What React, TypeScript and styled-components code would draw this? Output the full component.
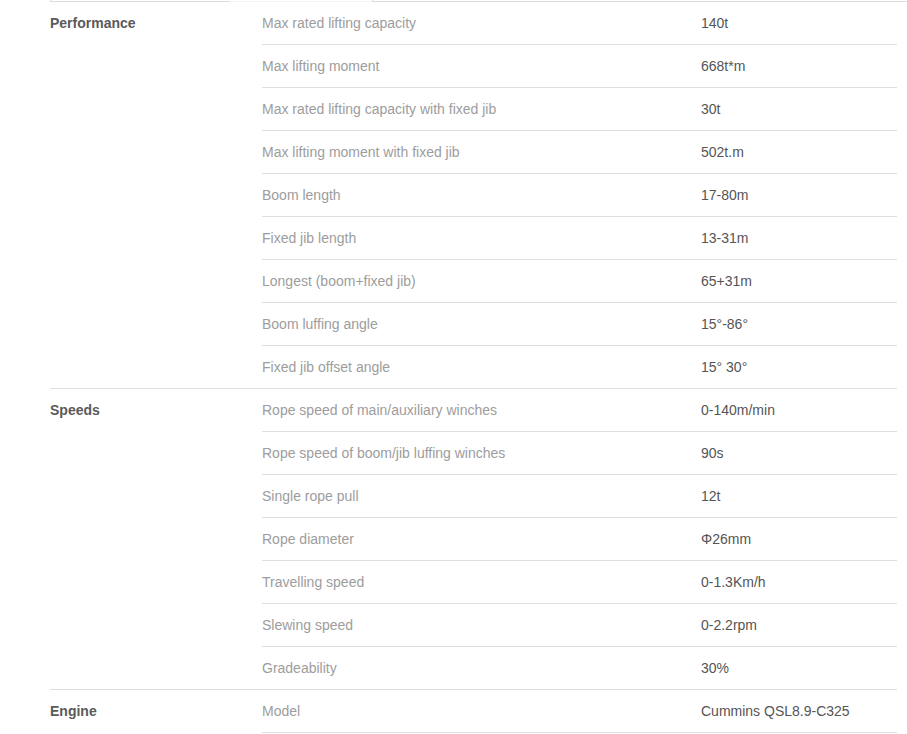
import React from "react";
import styled, { createGlobalStyle } from "styled-components";

const Global = createGlobalStyle`
  html, body { margin: 0; padding: 0; background: #fff; }
  body { font-family: "Liberation Sans", Arial, sans-serif; }
`;

const Page = styled.div`
  width: 907px;
  overflow: hidden;
`;

const TabStrip = styled.div`
  display: flex;
  height: 2px;
  padding-left: 50px;
`;

const Tab = styled.div<{ $active?: boolean; $grow?: boolean }>`
  box-sizing: border-box;
  height: 2px;
  width: ${(p) => (p.$grow ? "auto" : p.$active ? "142px" : "180px")};
  flex: ${(p) => (p.$grow ? "1" : "none")};
  border-bottom: 1px solid ${(p) => (p.$active ? "#f3f3f3" : "#dcdcdc")};
  border-left: ${(p) => (p.$grow ? "1px solid #dcdcdc" : p.$active ? "none" : "1px solid #dcdcdc")};
`;

const Table = styled.div`
  margin-left: 50px;
  width: 847px;
  display: flex;
  flex-direction: column;
`;

const Group = styled.div<{ $last?: boolean }>`
  display: flex;
  border-bottom: ${(p) => (p.$last ? "none" : "1px solid #dedede")};
`;

const GroupName = styled.div`
  width: 212px;
  flex: none;
  font-size: 14px;
  font-weight: bold;
  color: #5a5a5a;
  line-height: 42px;
`;

const Items = styled.div`
  flex: 1;
  display: flex;
  flex-direction: column;
`;

const Row = styled.div<{ $border: boolean }>`
  display: flex;
  height: 42px;
  align-items: center;
  border-bottom: ${(p) => (p.$border ? "1px solid #dedede" : "none")};
  font-size: 14px;
`;

const Param = styled.div`
  width: 439px;
  flex: none;
  color: #9d9d9d;
`;

const Value = styled.div`
  flex: 1;
  color: #555;
`;

type Spec = { group: string; rows: [string, string][] };

const specs: Spec[] = [
  {
    group: "Performance",
    rows: [
      ["Max rated lifting capacity", "140t"],
      ["Max lifting moment", "668t*m"],
      ["Max rated lifting capacity with fixed jib", "30t"],
      ["Max lifting moment with fixed jib", "502t.m"],
      ["Boom length", "17-80m"],
      ["Fixed jib length", "13-31m"],
      ["Longest (boom+fixed jib)", "65+31m"],
      ["Boom luffing angle", "15°-86°"],
      ["Fixed jib offset angle", "15° 30°"],
    ],
  },
  {
    group: "Speeds",
    rows: [
      ["Rope speed of main/auxiliary winches", "0-140m/min"],
      ["Rope speed of boom/jib luffing winches", "90s"],
      ["Single rope pull", "12t"],
      ["Rope diameter", "Φ26mm"],
      ["Travelling speed", "0-1.3Km/h"],
      ["Slewing speed", "0-2.2rpm"],
      ["Gradeability", "30%"],
    ],
  },
  {
    group: "Engine",
    rows: [["Model", "Cummins QSL8.9-C325"]],
  },
];

export default function App() {
  return (
    <Page>
      <Global />
      <TabStrip>
        <Tab />
        <Tab $active />
        <Tab $grow />
      </TabStrip>
      <Table>
        {specs.map((s, gi) => {
          const lastGroup = gi === specs.length - 1;
          return (
            <Group key={s.group} $last={lastGroup}>
              <GroupName>{s.group}</GroupName>
              <Items>
                {s.rows.map(([k, v], ri) => (
                  <Row key={k} $border={ri < s.rows.length - 1 || lastGroup}>
                    <Param>{k}</Param>
                    <Value>{v}</Value>
                  </Row>
                ))}
              </Items>
            </Group>
          );
        })}
      </Table>
    </Page>
  );
}
